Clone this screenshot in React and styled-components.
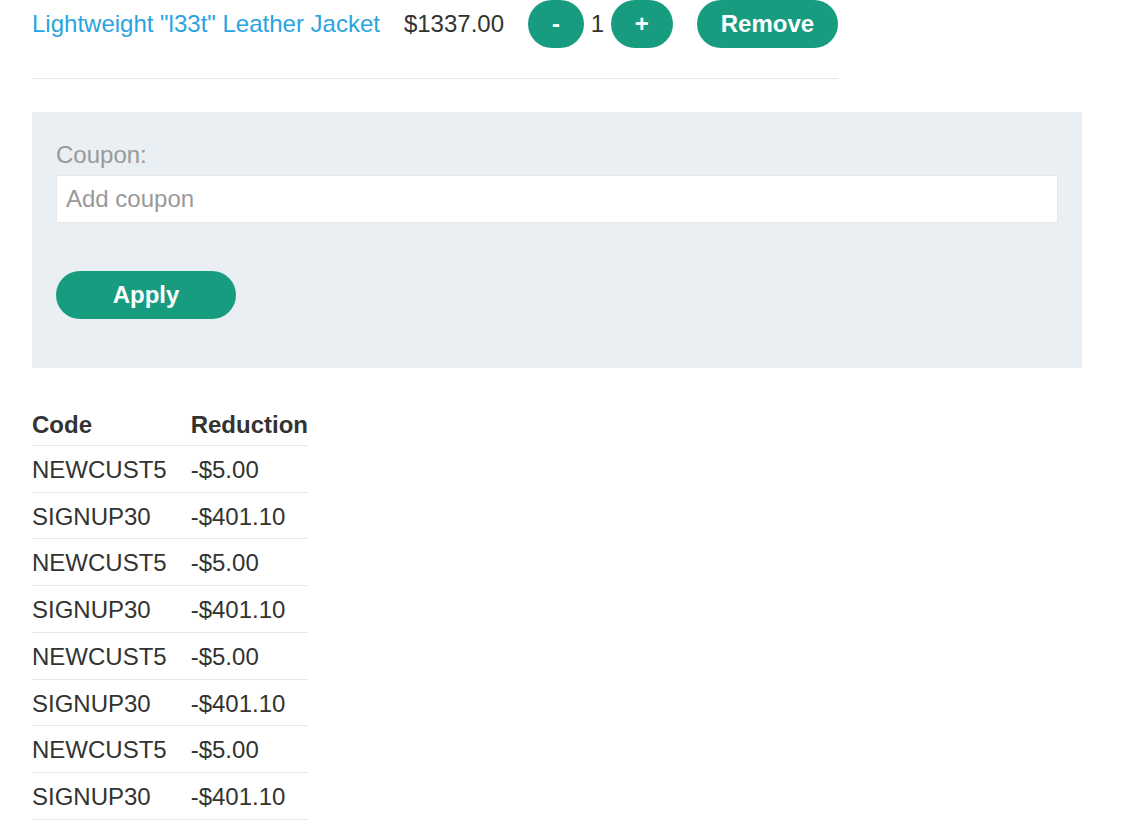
import React from "react";
import styled, { createGlobalStyle } from "styled-components";

const Global = createGlobalStyle`
  html, body { margin: 0; padding: 0; background: #ffffff; }
  body {
    font-family: "Liberation Sans", Arial, sans-serif;
    font-size: 24px;
    color: #333332;
  }
  * { box-sizing: border-box; }
`;

const Page = styled.main`
  padding: 0 46px 0 32px;
`;

const CartRow = styled.div`
  display: inline-flex;
  align-items: center;
  gap: 24px;
  height: 79px;
  padding-bottom: 31px;
  border-bottom: 1px solid #e6e6e6;
`;

const ProductLink = styled.a`
  color: #2aa4e0;
  text-decoration: none;
  line-height: 28px;
`;

const Price = styled.span`
  line-height: 28px;
`;

const Quantity = styled.div`
  display: flex;
  align-items: center;
  line-height: 28px;
`;

const Qty = styled.span`
  padding: 0 6.67px;
`;

const PillButton = styled.button`
  height: 48px;
  min-width: ${(p) => (p.$wide ? "180px" : "0")};
  padding: 0 24px;
  border: none;
  border-radius: 24px;
  background: #179c80;
  color: #ffffff;
  font-family: "Liberation Sans", Arial, sans-serif;
  font-size: 24px;
  font-weight: bold;
  line-height: 28px;
  cursor: pointer;
`;

const CouponPanel = styled.form`
  margin-top: 33px;
  width: 1050px;
  background: #e9eff2;
  padding: 24px 24px 49px;
`;

const Label = styled.label`
  display: block;
  color: #999999;
  line-height: 36px;
  margin-top: 1px;
  margin-bottom: 2px;
`;

const Input = styled.input`
  display: block;
  width: 100%;
  height: 48px;
  padding: 0 9px 1px;
  border: 1px solid #e6e6e6;
  background: #ffffff;
  font-family: "Liberation Sans", Arial, sans-serif;
  font-size: 24px;
  color: #333332;
  outline: none;
  &::placeholder { color: #999999; }
`;

const ApplyRow = styled.div`
  margin-top: 48px;
`;

const Table = styled.table`
  margin-top: 31px;
  border-collapse: collapse;
`;

const Th = styled.th`
  text-align: left;
  font-weight: bold;
  padding: 12px 24px 6px 0;
  line-height: 27.75px;
  border-bottom: 1px solid #e6e6e6;
  &:last-child { padding-right: 0; }
`;

const Td = styled.td`
  padding: 10px 24px 8px 0;
  line-height: 27.75px;
  border-bottom: 1px solid #e6e6e6;
  &:last-child { padding-right: 0; }
`;

const coupons = [
  ["NEWCUST5", "-$5.00"],
  ["SIGNUP30", "-$401.10"],
  ["NEWCUST5", "-$5.00"],
  ["SIGNUP30", "-$401.10"],
  ["NEWCUST5", "-$5.00"],
  ["SIGNUP30", "-$401.10"],
  ["NEWCUST5", "-$5.00"],
  ["SIGNUP30", "-$401.10"],
];

export default function App() {
  return (
    <>
      <Global />
      <Page>
        <CartRow>
          <ProductLink href="#">Lightweight "l33t" Leather Jacket</ProductLink>
          <Price>$1337.00</Price>
          <Quantity>
            <PillButton type="button">-</PillButton>
            <Qty>1</Qty>
            <PillButton type="button">+</PillButton>
          </Quantity>
          <PillButton type="button">Remove</PillButton>
        </CartRow>

        <CouponPanel onSubmit={(e) => e.preventDefault()}>
          <Label htmlFor="coupon">Coupon:</Label>
          <Input id="coupon" placeholder="Add coupon" />
          <ApplyRow>
            <PillButton $wide type="submit">Apply</PillButton>
          </ApplyRow>
        </CouponPanel>

        <Table>
          <thead>
            <tr>
              <Th>Code</Th>
              <Th>Reduction</Th>
            </tr>
          </thead>
          <tbody>
            {coupons.map(([code, red], i) => (
              <tr key={i}>
                <Td>{code}</Td>
                <Td>{red}</Td>
              </tr>
            ))}
          </tbody>
        </Table>
      </Page>
    </>
  );
}
